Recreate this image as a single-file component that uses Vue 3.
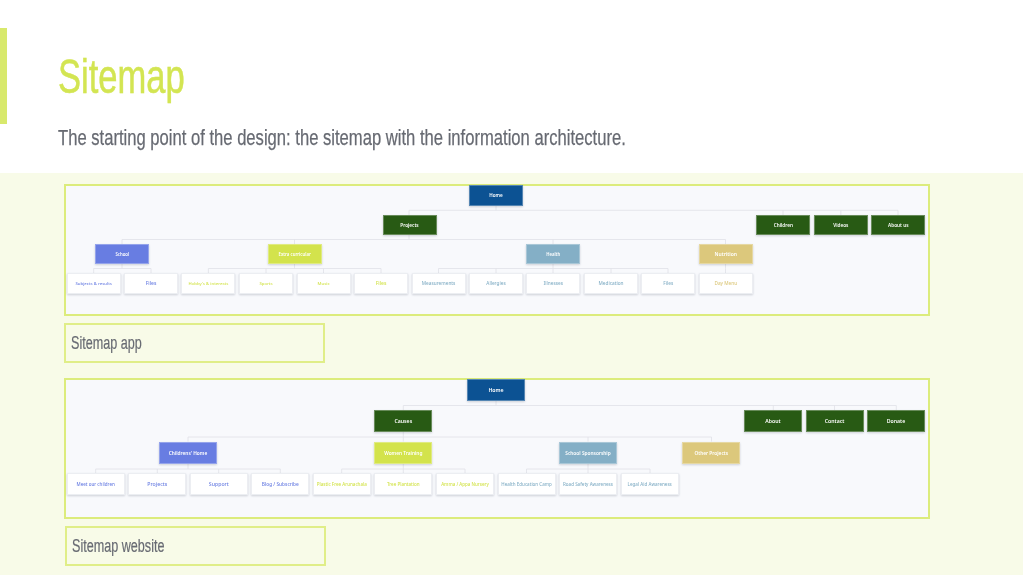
<script setup>
const C = { navy: '#0c5293', green: '#285a14', blue: '#687de2', lime: '#d3e34c', teal: '#84afc6', tan: '#dcc87c' }

function top(label, x, y, color, fs) { return { label, x, y, color, fs, fill: true } }
function leaf(label, x, y, color, fs) { return { label, x, y, color, fs, fill: false } }

const appNodes = [
  top('Home', 469, 185, C.navy, 4.6),
  top('Projects', 382.5, 214.6, C.green, 4.7),
  top('Children', 756.3, 214.6, C.green, 4.7),
  top('Videos', 813.8, 214.6, C.green, 4.7),
  top('About us', 871.3, 214.6, C.green, 4.7),
  top('School', 95.3, 243.8, C.blue, 4.3),
  top('Extra curricular', 267.7, 243.8, C.lime, 4.3),
  top('Health', 526.3, 243.8, C.teal, 4.3),
  top('Nutrition', 698.8, 243.8, C.tan, 5),
  ...[['Subjects & results', 66.7, 4.3], ['Files', 124, 5]].map(([l, x, s]) => leaf(l, x, 273, C.blue, s)),
  ...[["Hobby's & interests", 181.4, 4.3], ['Sports', 239, 4.3], ['Music', 296.5, 4.3], ['Files', 354, 5]].map(([l, x, s]) => leaf(l, x, 273, C.lime, s)),
  ...[['Measurements', 411.6], ['Allergies', 469], ['Illnesses', 526.3], ['Medication', 584], ['Files', 641.3]].map(([l, x]) => leaf(l, x, 273, C.teal, 4.7)),
  leaf('Day Menu', 698.8, 273, C.tan, 4.7)
]

function tree(fromX, fromY, busY, drops, toY) {
  const xs = drops
  let d = `M${fromX} ${fromY}V${busY}M${Math.min(...xs)} ${busY}H${Math.max(...xs)}`
  xs.forEach((x) => { d += `M${x} ${busY}V${toY}` })
  return d
}

const appLines = [
  tree(496, 205, 210.3, [409, 783, 840.8, 898], 215),
  tree(409, 235, 239.5, [122, 294.5, 553, 725.5], 244),
  tree(122, 264, 268.5, [93.7, 151], 273),
  tree(294.5, 264, 268.5, [208.4, 266, 323.5, 381], 273),
  tree(553, 264, 268.5, [438.5, 496, 553, 611, 668], 273),
  tree(725.5, 264, 268.5, [725.5], 273)
].join('')

const webNodes = [
  top('Home', 467, 379.5, C.navy, 5.2),
  top('Causes', 374.3, 410.7, C.green, 5.2),
  top('About', 744, 410.7, C.green, 5.2),
  top('Contact', 805.6, 410.7, C.green, 5.2),
  top('Donate', 867, 410.7, C.green, 5.2),
  top("Childrens' Home", 159, 442, C.blue, 4.8),
  top('Women Training', 374.3, 442, C.lime, 4.8),
  top('School Sponsorship', 559, 442, C.teal, 4.8),
  top('Other Projects', 682.3, 442, C.tan, 4.8),
  ...[['Meet our children', 66.7, 4.5], ['Projects', 128.3, 5.2], ['Support', 189.8, 5.2], ['Blog / Subscribe', 251.3, 4.8]].map(([l, x, s]) => leaf(l, x, 473.4, C.blue, s)),
  ...[['Plastic Free Arunachala', 312.8], ['Tree Plantation', 374.3], ['Amma / Appa Nursery', 436]].map(([l, x]) => leaf(l, x, 473.4, C.lime, 4.5)),
  ...[['Health Education Camp', 497.6], ['Road Safety Awareness', 559], ['Legal Aid Awareness', 620.7]].map(([l, x]) => leaf(l, x, 473.4, C.teal, 4.5))
]

const webLines = [
  tree(496, 401, 406, [403.3, 773.3, 834.5, 896.3], 411),
  tree(403.3, 432, 437.5, [188, 403.3, 588, 711.5], 442),
  tree(188, 464, 469.5, [95.7, 157.3, 218.7, 280.3], 473.5),
  tree(403.3, 464, 469.5, [341.7, 403.3, 465], 473.5),
  tree(588, 464, 469.5, [526.5, 588, 650], 473.5)
].join('')

const frames = [
  { key: 'app', ox: 64, oy: 184, h: 132, nw: 54, nh: 20.5, nodes: appNodes, lines: appLines, caption: 'Sitemap app' },
  { key: 'web', ox: 64, oy: 378.5, h: 140.5, nw: 58, nh: 22, nodes: webNodes, lines: webLines, caption: 'Sitemap website' }
]

function nodeStyle(f, n) {
  return {
    left: n.x - f.ox - 2 + 'px',
    top: n.y - f.oy - 2 + 'px',
    width: f.nw + 'px',
    height: f.nh + 'px',
    fontSize: n.fs + 'px',
    background: n.fill ? n.color : '#fff',
    color: n.fill ? '#fff' : n.color
  }
}
</script>

<template>
  <main class="page">
    <header class="head">
      <div class="bar"></div>
      <div class="titles">
        <h1 class="title">Sitemap</h1>
        <p class="sub">The starting point of the design: the sitemap with the information architecture.</p>
      </div>
    </header>
    <section class="body">
      <div v-for="f in frames" :key="f.key" class="block" :class="f.key">
        <div class="frame" :style="{ height: f.h + 'px' }">
          <svg class="wires" :viewBox="`${f.ox + 2} ${f.oy + 2} 862 ${f.h - 4}`" width="862" :height="f.h - 4">
            <path :d="f.lines" fill="none" stroke="#dfe1e7" stroke-width="0.8" />
          </svg>
          <div v-for="n in f.nodes" :key="n.label + n.x" class="node" :class="{ leaf: !n.fill }" :style="nodeStyle(f, n)">{{ n.label }}</div>
        </div>
        <div class="caption"><span>{{ f.caption }}</span></div>
      </div>
    </section>
  </main>
</template>

<style scoped>
.page {
  width: 1023px;
  height: 575px;
  overflow: hidden;
  background: #fff;
  font-family: "Liberation Sans", sans-serif;
}
.head {
  height: 173px;
  display: flex;
  box-sizing: border-box;
  padding-top: 28px;
}
.bar {
  width: 7px;
  height: 96px;
  background: #d8e96c;
}
.titles {
  margin-left: 51px;
  filter: blur(0.3px);
}
.title {
  margin: 22px 0 0;
  font-size: 49px;
  line-height: 52px;
  font-weight: 400;
  color: #d3e552;
  -webkit-text-stroke: 0.5px #d3e552;
  transform: scaleX(0.705);
  transform-origin: left center;
}
.sub {
  margin: 23px 0 0;
  font-size: 22px;
  line-height: 26px;
  color: #676a72;
  -webkit-text-stroke: 0.25px #676a72;
  white-space: nowrap;
  transform: scaleX(0.755);
  transform-origin: left center;
}
.body {
  height: 402px;
  box-sizing: border-box;
  background: #f8fbe8;
  padding: 11px 0 0 64px;
  display: flex;
  flex-direction: column;
  gap: 15px;
}
.frame {
  position: relative;
  width: 866px;
  box-sizing: border-box;
  border: 2px solid #dcec7c;
  background: #f8f9fc;
}
.wires {
  position: absolute;
  left: 0;
  top: 0;
  overflow: visible;
}
.node {
  position: absolute;
  display: flex;
  align-items: center;
  justify-content: center;
  box-sizing: border-box;
  border: 0.5px solid rgba(255, 255, 255, 0.3);
  box-shadow: 0 1px 2px rgba(60, 70, 90, 0.22);
  font-family: "Noto Sans", sans-serif;
  font-weight: 600;
  white-space: nowrap;
  filter: blur(0.3px);
}
.node.leaf {
  font-weight: 500;
  border-color: #eceef2;
}
.caption {
  width: 261px;
  height: 40px;
  margin-top: 7px;
  box-sizing: border-box;
  border: 2px solid #e0ee88;
  display: flex;
  align-items: center;
  padding-left: 5px;
}
.web .caption {
  margin-left: 1px;
  margin-top: 7.5px;
}
.caption span {
  font-size: 18px;
  color: #676a72;
  white-space: nowrap;
  -webkit-text-stroke: 0.2px #676a72;
  transform: scaleX(0.7);
  transform-origin: left center;
  filter: blur(0.25px);
}
</style>

<style>
html, body { margin: 0; background: #fff; }
</style>
